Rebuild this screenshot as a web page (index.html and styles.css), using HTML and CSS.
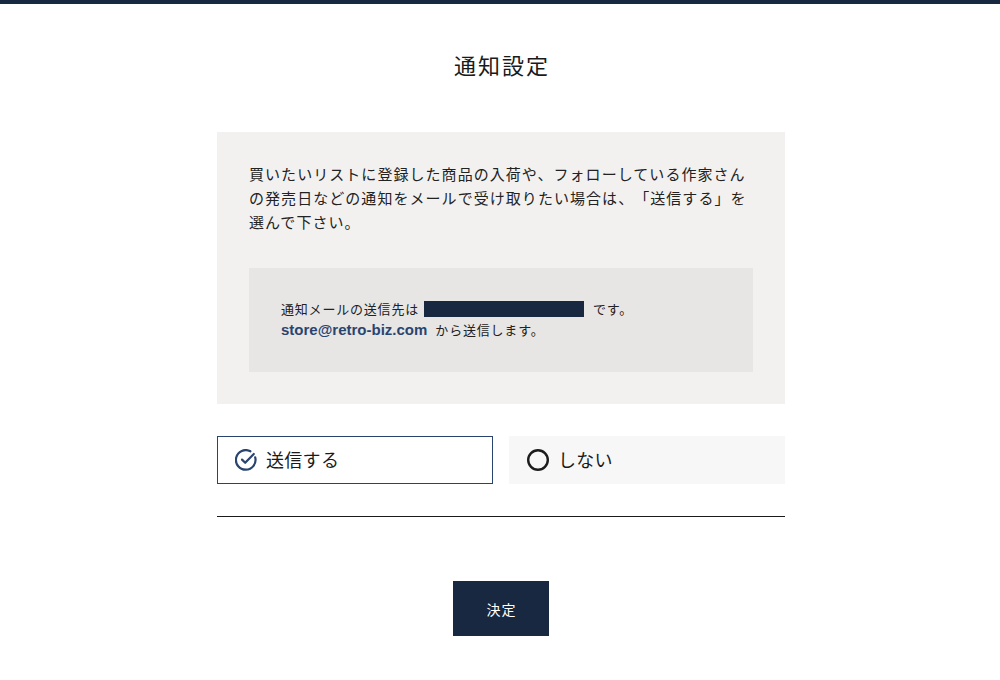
FILE: index.html
```html
<!DOCTYPE html>
<html lang="ja">
<head>
<meta charset="utf-8">
<title>通知設定</title>
<link rel="stylesheet" href="styles.css">
</head>
<body>
<div class="topbar"></div>
<main class="page">
  <h1 class="title">通知設定</h1>
  <section class="info">
    <p class="lead">買いたいリストに登録した商品の入荷や、フォローしている作家さん<br>の発売日などの通知をメールで受け取りたい場合は、「送信する」を<br>選んで下さい。</p>
    <div class="note">
      <p>通知メールの送信先は<span class="mask"></span>です。</p>
      <p><span class="mail">store@retro-biz.com</span>から送信します。</p>
    </div>
  </section>
  <div class="options">
    <label class="option selected">
      <svg class="icon" viewBox="0 0 22 22" width="22" height="22">
        <path d="M20.2 8.4 A9.8 9.8 0 1 1 15.4 2.3" fill="none" stroke="#2a4470" stroke-width="2.2" stroke-linecap="round"/>
        <path d="M7 10.6 L10.2 13.8 L18.8 5" fill="none" stroke="#2a4470" stroke-width="2.2" stroke-linecap="round" stroke-linejoin="round"/>
      </svg>
      <span>送信する</span>
    </label>
    <label class="option">
      <svg class="icon" viewBox="0 0 22 22" width="22" height="22">
        <circle cx="11" cy="11" r="9.8" fill="none" stroke="#1c1c1c" stroke-width="2.4"/>
      </svg>
      <span>しない</span>
    </label>
  </div>
  <hr class="rule">
  <div class="actions">
    <button class="submit" type="button">決定</button>
  </div>
</main>
</body>
</html>
```

FILE: styles.css
```css
* { box-sizing: border-box; }
html, body {
  margin: 0;
  padding: 0;
  background: #ffffff;
}
body {
  padding-left: 2px;
  font-family: "Noto Sans CJK JP", "Noto Sans", sans-serif;
  color: #1f1f1f;
  text-spacing-trim: space-all;
}
.topbar {
  height: 4px;
  margin-left: -2px;
  background: #172840;
}
.page {
  width: 568px;
  margin: 0 auto;
}
.title {
  margin: 0;
  padding-top: 44px;
  height: 128px;
  text-align: center;
  font-size: 22px;
  font-weight: 400;
  line-height: 32px;
  letter-spacing: 2px;
  text-indent: 2px;
  color: #1a1a1a;
}
.info {
  background: #f2f1f0;
  padding: 30px 32px 32px;
}
.lead {
  margin: 0;
  height: 72px;
  font-size: 15px;
  line-height: 24px;
  letter-spacing: 1.05px;
  white-space: nowrap;
  color: #222;
}
.note {
  margin-top: 34px;
  background: #e8e6e4;
  padding: 30px 32px 32px;
  height: 104px;
  font-size: 13px;
  line-height: 21px;
  letter-spacing: 0.8px;
  color: #222;
}
.note p {
  margin: 0;
  height: 21px;
}
.mask {
  display: inline-block;
  width: 160px;
  height: 16px;
  vertical-align: -3px;
  background: #172840;
  margin: 0 9px 0 5px;
}
.mail {
  font-family: "Liberation Sans", Arial, sans-serif;
  font-weight: 700;
  font-size: 15px;
  line-height: 1;
  letter-spacing: 0;
  color: #2a4470;
  margin-right: 8px;
}
.options {
  display: grid;
  grid-template-columns: 1fr 1fr;
  gap: 16px;
  margin-top: 32px;
}
.option {
  height: 48px;
  display: flex;
  align-items: center;
  gap: 9px;
  padding-left: 17px;
  font-size: 18px;
  letter-spacing: 0.3px;
  color: #1a1a1a;
  background: #f7f7f7;
  border: 1px solid transparent;
}
.option span { margin-top: -3px; }
.option.selected {
  background: #ffffff;
  border-color: #2a4470;
}
.icon { flex: none; }
.rule {
  margin: 32px 0 0;
  border: 0;
  border-top: 1px solid #1a1a1a;
  height: 0;
}
.actions {
  display: flex;
  justify-content: center;
  padding-top: 64px;
}
.submit {
  width: 96px;
  height: 55px;
  border: 0;
  background: #172840;
  color: #ffffff;
  font-family: "Noto Sans CJK JP", "Noto Sans", sans-serif;
  font-size: 14px;
  letter-spacing: 1px;
  text-indent: 1px;
  cursor: pointer;
}
```
